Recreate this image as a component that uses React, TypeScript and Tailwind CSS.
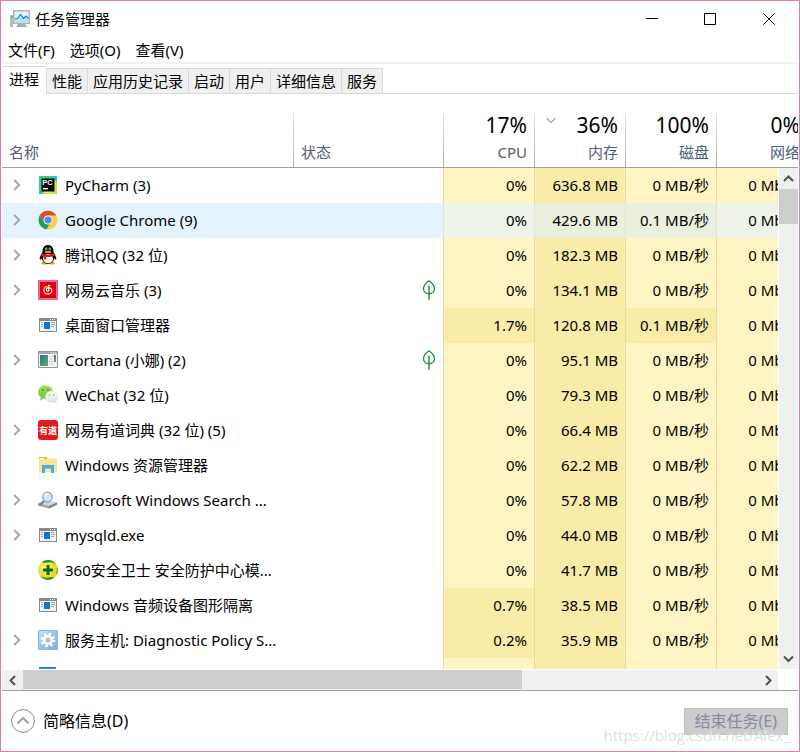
import React from "react";

type Process = {
  name: string;
  icon: React.ReactNode;
  expandable?: boolean;
  suspended?: boolean;
  selected?: boolean;
  cpu: string;
  memory: string;
  disk: string;
  network: string;
};

const tabs = ["进程", "性能", "应用历史记录", "启动", "用户", "详细信息", "服务"];
const menus = ["文件(F)", "选项(O)", "查看(V)"];

const columns = [
  { label: "CPU", total: "17%" },
  { label: "内存", total: "36%", sorted: true },
  { label: "磁盘", total: "100%" },
  { label: "网络", total: "0%" },
];

const processes: Process[] = [
  { name: "PyCharm (3)", icon: <PyCharmIcon />, expandable: true, cpu: "0%", memory: "636.8 MB", disk: "0 MB/秒", network: "0 Mbps" },
  { name: "Google Chrome (9)", icon: <ChromeIcon />, expandable: true, selected: true, cpu: "0%", memory: "429.6 MB", disk: "0.1 MB/秒", network: "0 Mbps" },
  { name: "腾讯QQ (32 位)", icon: <QQIcon />, expandable: true, cpu: "0%", memory: "182.3 MB", disk: "0 MB/秒", network: "0 Mbps" },
  { name: "网易云音乐 (3)", icon: <CloudMusicIcon />, expandable: true, suspended: true, cpu: "0%", memory: "134.1 MB", disk: "0 MB/秒", network: "0 Mbps" },
  { name: "桌面窗口管理器", icon: <WindowIcon />, cpu: "1.7%", memory: "120.8 MB", disk: "0.1 MB/秒", network: "0 Mbps" },
  { name: "Cortana (小娜) (2)", icon: <CortanaIcon />, expandable: true, suspended: true, cpu: "0%", memory: "95.1 MB", disk: "0 MB/秒", network: "0 Mbps" },
  { name: "WeChat (32 位)", icon: <WeChatIcon />, cpu: "0%", memory: "79.3 MB", disk: "0 MB/秒", network: "0 Mbps" },
  { name: "网易有道词典 (32 位) (5)", icon: <YoudaoIcon />, expandable: true, cpu: "0%", memory: "66.4 MB", disk: "0 MB/秒", network: "0 Mbps" },
  { name: "Windows 资源管理器", icon: <ExplorerIcon />, cpu: "0%", memory: "62.2 MB", disk: "0 MB/秒", network: "0 Mbps" },
  { name: "Microsoft Windows Search ...", icon: <SearchIcon />, expandable: true, cpu: "0%", memory: "57.8 MB", disk: "0 MB/秒", network: "0 Mbps" },
  { name: "mysqld.exe", icon: <WindowIcon />, expandable: true, cpu: "0%", memory: "44.0 MB", disk: "0 MB/秒", network: "0 Mbps" },
  { name: "360安全卫士 安全防护中心模...", icon: <Safe360Icon />, cpu: "0%", memory: "41.7 MB", disk: "0 MB/秒", network: "0 Mbps" },
  { name: "Windows 音频设备图形隔离", icon: <WindowIcon />, cpu: "0.7%", memory: "38.5 MB", disk: "0 MB/秒", network: "0 Mbps" },
  { name: "服务主机: Diagnostic Policy S...", icon: <ServiceIcon />, expandable: true, cpu: "0.2%", memory: "35.9 MB", disk: "0 MB/秒", network: "0 Mbps" },
  { name: "", icon: <BlueIcon />, cpu: "", memory: "", disk: "", network: "" },
];

export default function App() {
  return (
    <div className="flex h-screen flex-col overflow-hidden border border-[#e07db8] bg-white px-px font-['Noto_Sans','Noto_Sans_CJK_SC',sans-serif] text-[15px] leading-5 text-black">
      <TitleBar />
      <nav className="flex h-[25px] shrink-0 items-center gap-[15px] pl-1.5">
        {menus.map((menu) => (
          <button key={menu} type="button">{menu}</button>
        ))}
      </nav>
      <TabBar />
      <main className="relative mt-[17px] min-h-0 flex-1 overflow-hidden">
        <ProcessTable />
        <VerticalScrollbar />
      </main>
      <HorizontalScrollbar />
      <Footer />
    </div>
  );
}

function TitleBar() {
  return (
    <header className="flex h-9 shrink-0 items-center pl-2">
      <TaskManagerIcon />
      <h1 className="ml-[5px] flex-1">任务管理器</h1>
      <button type="button" aria-label="最小化" className="flex w-[59px] justify-center">
        <svg width="12" height="12" viewBox="0 0 12 12" shapeRendering="crispEdges"><path d="M0 5.5h12" stroke="#000" /></svg>
      </button>
      <button type="button" aria-label="最大化" className="flex w-[58px] justify-center">
        <svg width="12" height="12" viewBox="0 0 12 12" fill="none"><path d="M.5.5h11v11H.5z" stroke="#000" /></svg>
      </button>
      <button type="button" aria-label="关闭" className="flex w-[59px] justify-center">
        <svg width="12" height="12" viewBox="0 0 12 12"><path d="M.3.3l11.4 11.4M11.7.3L.3 11.7" stroke="#000" /></svg>
      </button>
    </header>
  );
}

function TabBar() {
  return (
    <div role="tablist" className="flex h-8 shrink-0 items-end border-t-2 border-[#f0f0f0] bg-[linear-gradient(#d9d9d9,#d9d9d9)] bg-[length:100%_1px] bg-bottom bg-no-repeat">
      {tabs.map((tab, i) =>
        i === 0 ? (
          <button key={tab} type="button" role="tab" aria-selected="true" className="h-[28px] border-t border-[#d9d9d9] bg-white px-[7px] pb-1">
            {tab}
          </button>
        ) : (
          <button key={tab} type="button" role="tab" aria-selected="false" className="h-[26px] border-y border-l border-[#d9d9d9] bg-[#f0f0f0] px-[5px] last:border-r">
            {tab}
          </button>
        )
      )}
    </div>
  );
}

function ProcessTable() {
  return (
    <table className="w-full min-w-[805px] table-fixed border-separate border-spacing-0">
      <colgroup>
        <col />
        <col className="w-[150px]" />
        <col className="w-[91px]" />
        <col className="w-[91px]" />
        <col className="w-[91px]" />
        <col className="w-[91px]" />
      </colgroup>
      <thead>
        <tr className="h-[57px] align-bottom text-[#4c607a]">
          <th className="border-b border-[#a0a0a0] pb-[5px] pl-[7px] text-left font-normal">名称</th>
          <th className="border-b border-[#a0a0a0] bg-[linear-gradient(#e4e4e4,#b0b0b0)] bg-[length:1px_54px] bg-left-bottom bg-no-repeat pb-[5px] pl-2 text-left font-normal">状态</th>
          {columns.map((col) => (
            <th key={col.label} className="relative border-b border-[#a0a0a0] bg-[linear-gradient(#e4e4e4,#b0b0b0)] bg-[length:1px_54px] bg-left-bottom bg-no-repeat pr-[7px] pb-[5px] text-right font-normal">
              {col.sorted && (
                <svg className="absolute top-1.5 left-3" width="10" height="7" viewBox="0 0 10 7" fill="none"><path d="M.5 1L5 5.5 9.500 1" stroke="#606060" /></svg>
              )}
              <div className="mb-[3px] text-[21px] leading-7 text-black">{col.total}</div>
              <div>{col.label}</div>
            </th>
          ))}
        </tr>
      </thead>
      <tbody>
        {processes.map((process, i) => (
          <ProcessRow key={i} process={process} />
        ))}
      </tbody>
    </table>
  );
}

function ProcessRow({ process }: { process: Process }) {
  const { selected } = process;
  const cellClass = (heavy: boolean) => {
    const base = "border-l pr-[7px] pb-0.5 text-right whitespace-nowrap ";
    if (selected) return base + (heavy ? "border-[#e9e2cf] bg-[#ebf0de]" : "border-[#e9e2cf] bg-[#eff4eb]");
    return base + (heavy ? "border-[#edd8a4] bg-[#f9eca8]" : "border-[#edd8a4] bg-[#fff4c4]");
  };
  return (
    <tr className={selected ? "h-[35px] bg-[#e5f3ff]" : "h-[35px]"}>
      <td className="pb-0.5">
        <div className="flex items-center">
          <span className="flex w-9 pl-[11px]">
            {process.expandable && (
              <button type="button" aria-label={"展开 " + process.name}>
                <svg width="8" height="12" viewBox="0 0 8 12" fill="none"><path d="M1.200 1L6.200 6l-5 5" stroke="#a6a6a6" strokeWidth="2" /></svg>
              </button>
            )}
          </span>
          <span className="size-5">{process.icon}</span>
          <span className="ml-[7px] whitespace-nowrap">{process.name}</span>
        </div>
      </td>
      <td className="pb-0.5">
        {process.suspended && (
          <svg className="mr-[7px] ml-auto" width="14" height="20" viewBox="0 0 14 20" fill="none" stroke="#16913f" strokeWidth="1.400">
            <path d="M7 .8C4.500 2.600 1.500 5.200 1.500 8.500c0 3.300 2.500 5.200 5.500 5.200s5.500-1.900 5.500-5.200C12.500 5.200 9.500 2.600 7 .8z" />
            <path d="M7 5.500V20" />
          </svg>
        )}
      </td>
      <td className={cellClass(process.cpu !== "" && process.cpu !== "0%")}>{process.cpu}</td>
      <td className={cellClass(true)}>{process.memory}</td>
      <td className={cellClass(process.disk.startsWith("0.1"))}>{process.disk}</td>
      <td className={cellClass(false)}>{process.network}</td>
    </tr>
  );
}

function VerticalScrollbar() {
  return (
    <div className="absolute top-[57px] right-0 bottom-0 flex w-5 flex-col border-l border-white bg-[#f0f0f0]">
      <button type="button" aria-label="向上滚动" className="flex h-[21px] items-center justify-center">
        <Chevron d="M1 6l4.500-4.500L10 6" w={11} h={8} />
      </button>
      <div className="h-[35px] bg-[#cdcdcd]" />
      <button type="button" aria-label="向下滚动" className="mt-auto flex h-[21px] items-center justify-center">
        <Chevron d="M1 1.500L5.500 6 10 1.500" w={11} h={8} />
      </button>
    </div>
  );
}

function HorizontalScrollbar() {
  return (
    <div className="flex h-[22px] shrink-0 border-t border-b border-t-white border-b-[#a0a0a0] pr-5">
      <div className="flex flex-1 bg-[#f0f0f0]">
        <button type="button" aria-label="向左滚动" className="flex w-[21px] items-center justify-center">
          <Chevron d="M6 1L1.500 5.500 6 10" w={8} h={11} />
        </button>
        <div className="flex-1">
          <div className="h-[19px] w-[68%] bg-[#cdcdcd]" />
        </div>
        <button type="button" aria-label="向右滚动" className="flex w-[21px] items-center justify-center">
          <Chevron d="M2 1l4.500 4.500L2 10" w={8} h={11} />
        </button>
      </div>
    </div>
  );
}

function Footer() {
  return (
    <footer className="relative flex h-[60px] shrink-0 items-center justify-between pr-2.5 pl-[9px]">
      <button type="button" className="flex items-center gap-2 text-base">
        <svg width="24" height="24" viewBox="0 0 24 24" fill="none">
          <circle cx="12" cy="12" r="11.400" stroke="#8c8c8c" />
          <path d="M6.500 14.500L12 9l5.500 5.500" stroke="#a6a6a6" strokeWidth="2" />
        </svg>
        简略信息(D)
      </button>
      <button type="button" disabled className="h-[27px] border border-[#bfbfbf] bg-[#cccccc] px-2.5 text-base leading-5 text-[#838ba3]">
        结束任务(E)
      </button>
      <span className="pointer-events-none absolute right-2 bottom-1.5 font-['Open_Sans',sans-serif] text-[#dcdcdc]/90 [text-shadow:1px_1px_0_#ffffff80]">
        https://blog.csdn.net/Alex_
      </span>
    </footer>
  );
}

function Chevron({ d, w, h }: { d: string; w: number; h: number }) {
  return (
    <svg width={w} height={h} viewBox={`0 0 ${w} ${h}`} fill="none">
      <path d={d} stroke="#505050" strokeWidth="2" />
    </svg>
  );
}

function TaskManagerIcon() {
  return (
    <svg width="20" height="18" viewBox="0 0 20 18">
      <path d="M0 5h3v12H0z" fill="#b9bcbf" />
      <path d="M1 6h2v2H1z" fill="#3fd03f" />
      <path d="M8 14h7l2 3H6z" fill="#a9acaf" />
      <path d="M3 0h17v14H3z" fill="#b0b4b7" />
      <path d="M4.500 1.500h14v11h-14z" fill="#e2f4fc" />
      <path d="M4.500 9l3-1 3-3.500 3 4 2-2 3 2.500v3.500h-14z" fill="#b5e2f7" />
      <path d="M4.500 9l3-.5 3-4 3 4L16 6l2.500 2.500" fill="none" stroke="#1686bd" strokeWidth="1.200" />
    </svg>
  );
}

function PyCharmIcon() {
  return (
    <svg width="20" height="20" viewBox="0 0 20 20">
      <defs>
        <linearGradient id="pc" x1="0" y1="0" x2="1" y2="1">
          <stop offset="0" stopColor="#21d789" />
          <stop offset=".5" stopColor="#3fc8a0" />
          <stop offset=".6" stopColor="#e8ec4a" />
          <stop offset="1" stopColor="#b5e04c" />
        </linearGradient>
      </defs>
      <path d="M1 1h18v18H1z" fill="url(#pc)" />
      <path d="M1 13l5 6H1z" fill="#2bc8a0" />
      <path d="M13 1h6v7z" fill="#34bde0" />
      <path d="M3.500 3.500h13v13h-13z" fill="#050505" />
      <text x="4.300" y="10" fontSize="7.500" fontWeight="700" fontFamily="Liberation Sans" fill="#fff">PC</text>
      <path d="M5 13h5v1.400H5z" fill="#fff" />
    </svg>
  );
}

function ChromeIcon() {
  return (
    <svg width="20" height="20" viewBox="0 0 20 20">
      <circle cx="10" cy="10" r="9.500" fill="#ffcd40" />
      <path d="M1.800 5.200A9.500 9.500 0 0 1 18.200 5.500H10L6.100 12.200z" fill="#dd4b3e" />
      <path d="M1.800 5.200L6.100 12.200l3.900 2.300 1.500-.2-3 5A9.500 9.500 0 0 1 1.800 5.200z" fill="#18a05e" />
      <circle cx="10" cy="10" r="4.500" fill="#f3f3f3" />
      <circle cx="10" cy="10" r="3.500" fill="#4a8af4" />
    </svg>
  );
}

function QQIcon() {
  return (
    <svg width="20" height="20" viewBox="0 0 20 20">
      <ellipse cx="6.500" cy="18" rx="3.300" ry="1.600" fill="#f5a21b" />
      <ellipse cx="13.500" cy="18" rx="3.300" ry="1.600" fill="#f5a21b" />
      <path d="M10 0C6.500 0 4.600 2.500 4.600 5.500c0 1-.2 2-.8 3-1.300 2-2.400 4.300-2 5.800.3.900 1.200.4 2-.7.600 3.400 3 5.400 6.200 5.400s5.600-2 6.200-5.400c.8 1.100 1.700 1.600 2 .7.400-1.500-.7-3.800-2-5.800-.6-1-.8-2-.8-3C15.400 2.500 13.500 0 10 0z" fill="#0b0b0b" />
      <ellipse cx="10" cy="13.800" rx="5" ry="4.500" fill="#fff" />
      <ellipse cx="8.300" cy="4" rx="1" ry="1.500" fill="#fff" />
      <ellipse cx="11.700" cy="4" rx="1" ry="1.500" fill="#fff" />
      <circle cx="8.600" cy="4.200" r=".6" />
      <circle cx="11.400" cy="4.200" r=".6" />
      <ellipse cx="10" cy="6.900" rx="3.300" ry="1" fill="#f5a21b" />
      <path d="M4 8.500c4 1.900 8 1.900 12 0l.6 2c-2.600 1.300-5.500 1.700-8.300 1.400v2.600H5.800v-3.200c-.9-.2-1.700-.4-2.400-.8z" fill="#e81f1f" />
    </svg>
  );
}

function CloudMusicIcon() {
  return (
    <svg width="20" height="20" viewBox="0 0 20 20">
      <path d="M0 0h20v20H0z" fill="#e066ae" />
      <path d="M2 2h16v16H2z" fill="#e20000" />
      <g fill="none" stroke="#fff" strokeWidth="1.100" strokeLinecap="round">
        <path d="M8.500 6.500C5.800 7.400 5.400 10 6.300 12c1.200 2.500 4.900 2.700 6.700.8 1.700-1.900 1-5-2-5.200-1.900-.1-3 1.500-2.600 2.800.4 1.200 2.500 1.200 2.600-.3 0-1-.9-2.900-.8-4 .1-1 1.300-1.200 2-.5" />
      </g>
    </svg>
  );
}

function WindowIcon() {
  return (
    <svg width="20" height="20" viewBox="0 0 20 20" shapeRendering="crispEdges">
      <path d="M1 3h18v14H1z" fill="#858a8e" />
      <path d="M2 6h16v10H2z" fill="#f5f5f5" />
      <path d="M12 4h1v1h-1zM14 4h1v1h-1zM16 4h1v1h-1z" fill="#fff" />
      <path d="M6 7h6v7H6z" fill="#0678d7" />
      <path d="M3 7.500h2M3 9.500h2M3 11.500h2M13 7.500h4M13 9.500h4M13 11.500h3" stroke="#a5a5a5" />
    </svg>
  );
}

function CortanaIcon() {
  return (
    <svg width="20" height="20" viewBox="0 0 20 20">
      <defs>
        <linearGradient id="cortana" x1="0" y1="0" x2="1" y2="1">
          <stop offset="0" stopColor="#2d6d99" />
          <stop offset="1" stopColor="#5cb264" />
        </linearGradient>
      </defs>
      <path d="M.5 1.500h19v16H.5z" fill="#f4f5f6" stroke="#8c9399" />
      <path d="M1 2h18v2H1z" fill="#a5abb0" />
      <path d="M13 2.500h1v1h-1zM15 2.500h1v1h-1zM17 2.500h1v1h-1z" fill="#fff" />
      <path d="M2 5h8v11H2z" fill="url(#cortana)" />
      <path d="M16 5h2v7h-2z" fill="url(#cortana)" />
      <path d="M11.500 6.500H15M11.500 9H15M11.500 11.500H15M11.500 14H15" stroke="#c9cccf" />
    </svg>
  );
}

function WeChatIcon() {
  return (
    <svg width="20" height="20" viewBox="0 0 20 20">
      <defs>
        <linearGradient id="wechat" x1="0" y1="0" x2="0" y2="1">
          <stop offset="0" stopColor="#a5dc5c" />
          <stop offset="1" stopColor="#6cc13a" />
        </linearGradient>
        <linearGradient id="bubble" x1="0" y1="0" x2="0" y2="1">
          <stop offset="0" stopColor="#fff" />
          <stop offset="1" stopColor="#dcdedc" />
        </linearGradient>
      </defs>
      <path d="M7.500.5C3.400.5 0 3.200 0 7c0 2.200 1.100 4 2.900 5.200L2 15.500l3.500-2.200c.7.200 1.200.2 2 .2 4.200 0 7.500-2.700 7.500-6.500S11.700.5 7.500.5z" fill="url(#wechat)" />
      <circle cx="5" cy="5" r=".9" fill="#4d8a2c" />
      <circle cx="10" cy="5" r=".9" fill="#4d8a2c" />
      <path d="M13.700 6c-3.500 0-6.200 2.400-6.200 5.600s2.700 5.600 6.200 5.600c.7 0 1.300-.1 1.900-.3l2.600 1.500-.7-2.300c1.500-.9 2.400-2.600 2.400-4.500 0-3.200-2.700-5.600-6.200-5.600z" fill="url(#bubble)" stroke="#cfcfcf" strokeWidth=".5" />
      <circle cx="11.500" cy="10" r=".7" fill="#8b908b" />
      <circle cx="15.700" cy="10" r=".7" fill="#8b908b" />
    </svg>
  );
}

function YoudaoIcon() {
  return (
    <svg width="20" height="20" viewBox="0 0 20 20">
      <rect width="20" height="20" rx="3" fill="#e4191c" />
      <text x="10" y="13.500" textAnchor="middle" fontSize="9" fontWeight="700" fontFamily="Noto Sans CJK SC" fill="#fff">有道</text>
    </svg>
  );
}

function ExplorerIcon() {
  return (
    <svg width="20" height="20" viewBox="0 0 20 20">
      <path d="M1 2h8l1 1.500h9V17H1z" fill="#ffe394" />
      <path d="M1 2h8v2H1z" fill="#f6b92e" />
      <path d="M2 3h4v1H2z" fill="#fff" />
      <path d="M4 10h12v8h-3v-4.500H7V18H4z" fill="#3ab0e8" />
    </svg>
  );
}

function SearchIcon() {
  return (
    <svg width="20" height="20" viewBox="0 0 20 20">
      <path d="M0 13l7-3 12 2.500v2.500l-8 3.500-11-3z" fill="#d2d5d7" />
      <path d="M0 13l11 3v2.500L0 15.500z" fill="#a2a7ab" />
      <path d="M11 16l8-3.500v2.300l-8 3.700z" fill="#7b8185" />
      <path d="M6 11l-4.500 4.500" stroke="#7c8084" strokeWidth="2" />
      <circle cx="9.500" cy="7" r="4.800" fill="#cfe8fa" stroke="#9aa6b2" strokeWidth="1.300" />
      <path d="M6.500 6.500c.3-1.800 1.700-2.800 3.500-2.700" fill="none" stroke="#fff" strokeWidth="1.500" />
      <circle cx="14.500" cy="15.500" r=".8" fill="#53c653" />
    </svg>
  );
}

function Safe360Icon() {
  return (
    <svg width="20" height="20" viewBox="0 0 20 20">
      <defs>
        <radialGradient id="safe" cx=".4" cy=".4" r=".6">
          <stop offset="0" stopColor="#fdf97a" />
          <stop offset="1" stopColor="#e9cf12" />
        </radialGradient>
      </defs>
      <circle cx="10" cy="10" r="10" fill="url(#safe)" />
      <path d="M4 2.200C8-1.200 15-.4 18 4.200c-3-1.900-6-2.200-9-1.800-2 .3-3.800 1-5-.2z" fill="#23952b" />
      <path d="M16 17.800c-4 3.400-11 2.600-14-2 3 1.900 6 2.200 9 1.800 2-.3 3.800-1 5 .2z" fill="#23952b" />
      <path d="M19.500 7c.8 3 .3 6-1.500 8 .5-3 .5-5.500 1.500-8z" fill="#45a82b" />
      <path d="M8.500 5h3v3.500H15v3h-3.500V15h-3v-3.500H5v-3h3.500z" fill="#0a6a1b" />
    </svg>
  );
}

function ServiceIcon() {
  return (
    <svg width="20" height="20" viewBox="0 0 20 20">
      <defs>
        <linearGradient id="service" x1="0" y1="0" x2="1" y2="1">
          <stop offset="0" stopColor="#c2e1f7" />
          <stop offset="1" stopColor="#80a6dc" />
        </linearGradient>
      </defs>
      <path d="M.5.500h19v19H.5z" fill="url(#service)" stroke="#8fb5dc" />
      <circle cx="10" cy="10" r="6" fill="none" stroke="#fff" strokeWidth="2.600" strokeDasharray="2.360 2.352" />
      <circle cx="10" cy="10" r="3.800" fill="none" stroke="#fff" strokeWidth="2.400" />
    </svg>
  );
}

function BlueIcon() {
  return (
    <svg width="20" height="20" viewBox="0 0 20 20">
      <path d="M1 2h17v16H1z" fill="#3a9de0" />
      <path d="M1 2h17v1H1z" fill="#1876bb" />
    </svg>
  );
}
